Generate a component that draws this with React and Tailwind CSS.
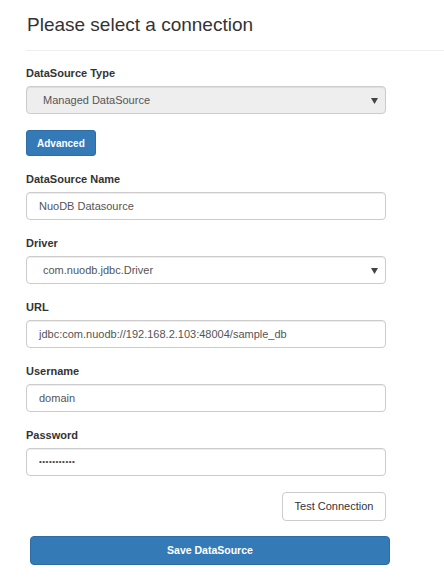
import React from "react";

const font = { fontFamily: '"Liberation Sans", Arial, sans-serif' };

function Label({ children }) {
  return <div className="text-[11px] leading-[15px] font-bold text-[#333]">{children}</div>;
}

function Caret() {
  return (
    <svg width="7" height="6" viewBox="0 0 7 6" className="absolute right-[7px] top-[11px]">
      <path d="M0 0h7L3.5 6z" fill="#444" />
    </svg>
  );
}

function Select({ value, disabled }) {
  return (
    <div
      className={`relative mt-[5px] h-[28px] w-[360px] rounded-[4px] border border-[#ccc] shadow-[inset_0_1px_1px_rgba(0,0,0,0.075)] flex items-center pl-[16px] text-[11px] text-[#555] ${
        disabled ? "bg-[#eee]" : "bg-white"
      }`}
    >
      {value}
      <Caret />
    </div>
  );
}

function Input({ value, password }) {
  return (
    <div className="mt-[5px] h-[28px] w-[360px] rounded-[4px] border border-[#ccc] bg-white shadow-[inset_0_1px_1px_rgba(0,0,0,0.075)] flex items-center pl-[12px] text-[11px] text-[#555]">
      {password ? <span className="text-[8px] tracking-[0.5px] text-[#444]">{value}</span> : value}
    </div>
  );
}

export default function App() {
  return (
    <div className="min-h-[586px] bg-white" style={font}>
      <div className="pl-[26px] pt-[14px]">
        <h3 className="pl-[1px] text-[19px] leading-[22px] text-[#333]">Please select a connection</h3>
      </div>
      <div className="ml-[26px] mt-[14px] h-px bg-[#eee]" />
      <div className="pl-[26px] pt-[15px] flex flex-col">
        <Label>DataSource Type</Label>
        <Select value="Managed DataSource" disabled />
        <button className="mt-[16px] self-start h-[26px] px-[10px] rounded-[3px] border border-[#2e6da4] bg-[#337ab7] text-white text-[10px] font-bold">
          Advanced
        </button>

        <div className="mt-[16px]">
          <Label>DataSource Name</Label>
          <Input value="NuoDB Datasource" />
        </div>
        <div className="mt-[16px]">
          <Label>Driver</Label>
          <Select value="com.nuodb.jdbc.Driver" />
        </div>
        <div className="mt-[16px]">
          <Label>URL</Label>
          <Input value="jdbc:com.nuodb://192.168.2.103:48004/sample_db" />
        </div>
        <div className="mt-[16px]">
          <Label>Username</Label>
          <Input value="domain" />
        </div>
        <div className="mt-[16px]">
          <Label>Password</Label>
          <Input value="•••••••••••" password />
        </div>

        <div className="w-[360px] flex justify-end mt-[16px]">
          <button className="h-[29px] w-[104px] rounded-[4px] border border-[#ccc] bg-white text-[11px] text-[#333]">
            Test Connection
          </button>
        </div>
        <button className="mt-[15px] ml-[4px] h-[29px] w-[360px] rounded-[4px] border border-[#2e6da4] bg-[#337ab7] text-white text-[10.5px] font-bold">
          Save DataSource
        </button>
      </div>
    </div>
  );
}
